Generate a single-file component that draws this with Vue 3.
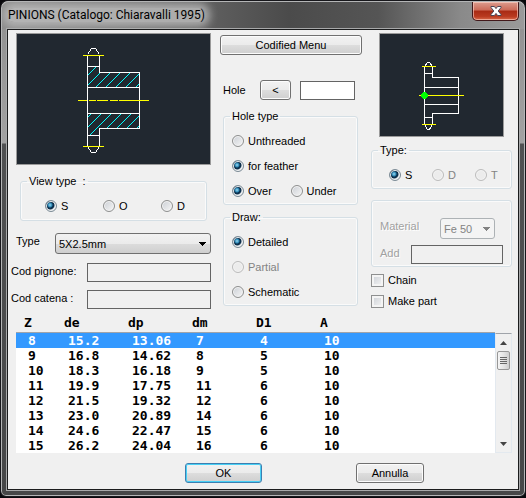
<template>
  <main class="dialog">
    <header class="titlebar">
      <h1 class="titlebar__text">PINIONS (Catalogo: Chiaravalli 1995)</h1>
      <button type="button" class="titlebar__close" aria-label="Close">
        <svg width="14" height="12" viewBox="0 0 14 12" aria-hidden="true">
          <path
            d="M2 1.5h3.4L7 3.6l1.6-2.1H12v1L9.2 6l2.8 3.5v1H8.6L7 8.4l-1.6 2.1H2v-1L4.8 6 2 2.5z"
            fill="#fff" stroke="#4a4656" stroke-width="1"
          />
        </svg>
      </button>
    </header>

    <form class="client" @submit.prevent>
      <div class="columns">
        <!-- Left: section preview and codes -->
        <div class="col col--left">
          <svg class="preview preview--section" viewBox="0 0 193 130" aria-hidden="true">
            <defs>
              <clipPath id="hub-top"><path d="M71 33h12v6h40v15H71z" /></clipPath>
              <clipPath id="hub-bottom"><path d="M71 80h52v15H83v7H71z" /></clipPath>
            </defs>
            <g stroke="#0ff" shape-rendering="crispEdges">
              <path v-for="n in 8" :key="`t${n}`" clip-path="url(#hub-top)" :d="`M${48 + n * 10} 54l22 -22`" />
              <path v-for="n in 9" :key="`b${n}`" clip-path="url(#hub-bottom)" :d="`M${42 + n * 10} 102l24 -24`" />
            </g>
            <g class="outline">
              <path d="M70.5 20.5V112.5M82.5 20.5V38.5H122.5V94.5H82.5V112.5M70.5 32.5H82.5M70.5 53.5H122.5M70.5 79.5H122.5M70.5 101.5H82.5" />
              <path d="M70.5 20.5L74.5 14.5H78.5L82.5 20.5" />
              <path d="M70.5 112.5L74.5 118.5H78.5L82.5 112.5" />
            </g>
            <g class="axis">
              <path d="M66 21.5H87" />
              <path d="M66 112.5H87" />
              <path d="M61 66.5H70M72 66.5H79M80 66.5H91M93 66.5H101M102 66.5H132" />
            </g>
          </svg>

          <fieldset class="group group--view">
            <legend>View type &nbsp;:</legend>
            <label v-for="v in ['S', 'O', 'D']" :key="v" class="option">
              <input v-model="view" type="radio" name="view" :value="v" />{{ v }}
            </label>
          </fieldset>

          <div class="row row--type">
            <label for="feather">Type</label>
            <select id="feather" v-model="feather" class="select">
              <option>5X2.5mm</option>
            </select>
          </div>
          <div class="row row--code">
            <label for="pignone">Cod pignone:</label>
            <input id="pignone" v-model="pignone" type="text" class="field" />
          </div>
          <div class="row row--code">
            <label for="catena">Cod catena :</label>
            <input id="catena" v-model="catena" type="text" class="field" />
          </div>
        </div>

        <!-- Middle: hole and drawing options -->
        <div class="col col--middle">
          <button type="button" class="btn">Codified Menu</button>

          <div class="hole">
            <label for="hole">Hole</label>
            <button type="button" class="btn btn--pick" aria-label="Pick hole">&lt;</button>
            <input id="hole" v-model="hole" type="text" class="field field--white" />
          </div>

          <fieldset class="group group--stack">
            <legend>Hole type</legend>
            <label class="option"><input v-model="holeType" type="radio" name="hole-type" value="plain" />Unthreaded</label>
            <label class="option"><input v-model="holeType" type="radio" name="hole-type" value="feather" />for feather</label>
            <div class="pair">
              <label class="option"><input v-model="side" type="radio" name="side" value="over" />Over</label>
              <label class="option"><input v-model="side" type="radio" name="side" value="under" />Under</label>
            </div>
          </fieldset>

          <fieldset class="group group--stack">
            <legend>Draw:</legend>
            <label class="option"><input v-model="draw" type="radio" name="draw" value="detailed" />Detailed</label>
            <label class="option option--off"><input v-model="draw" type="radio" name="draw" value="partial" disabled />Partial</label>
            <label class="option"><input v-model="draw" type="radio" name="draw" value="schematic" />Schematic</label>
          </fieldset>
        </div>

        <!-- Right: pinion type and material -->
        <div class="col col--right">
          <svg class="preview preview--type" viewBox="0 0 123 102" aria-hidden="true">
            <g class="outline">
              <path d="M44.5 32V91M52.5 32V43.5H78.5V79.5H52.5V91M44.5 39.5H52.5M44.5 53.5H78.5M44.5 70.5H78.5M44.5 83.5H52.5" />
              <path d="M44.5 32.5L47.5 28.5H49.5L52.5 32.5" />
              <path d="M44.5 90.5L47.5 95.5H49.5L52.5 90.5" />
            </g>
            <g class="axis">
              <path d="M42 32.5H56" />
              <path d="M42 90.5H56" />
              <path d="M39 61.5H84" />
            </g>
            <path d="M43 58h3v1h1v1h1v3h-1v1h-1v1h-3v-1h-1v-1h-1v-3h1v-1h1z" fill="#0f0" />
          </svg>

          <fieldset class="group group--kind">
            <legend>Type:</legend>
            <label v-for="k in ['S', 'D', 'T']" :key="k" class="option" :class="{ 'option--off': k !== 'S' }">
              <input v-model="kind" type="radio" name="kind" :value="k" :disabled="k !== 'S'" />{{ k }}
            </label>
          </fieldset>

          <fieldset class="group group--material" disabled aria-label="Material">
            <div class="row">
              <label for="material">Material</label>
              <select id="material" v-model="material" class="select">
                <option>Fe 50</option>
              </select>
            </div>
            <div class="row">
              <label for="add">Add</label>
              <input id="add" v-model="add" type="text" class="field" />
            </div>
          </fieldset>

          <div class="checks">
            <label class="option"><input v-model="chain" type="checkbox" />Chain</label>
            <label class="option"><input v-model="makePart" type="checkbox" />Make part</label>
          </div>
        </div>
      </div>

      <!-- Catalogue list -->
      <div class="list">
        <table class="sizes">
          <thead>
            <tr><th v-for="c in columns" :key="c" scope="col">{{ c }}</th></tr>
          </thead>
          <tbody>
            <tr
              v-for="(row, i) in rows" :key="row[0]"
              :class="{ 'is-selected': i === selected }" @click="selected = i"
            >
              <td v-for="(cell, j) in row" :key="j">{{ cell }}</td>
            </tr>
          </tbody>
        </table>
        <div class="scroll">
          <button type="button" class="scroll__arrow" aria-label="Scroll up">
            <svg width="7" height="4" viewBox="0 0 7 4"><path d="M0 4L3.5 0L7 4z" fill="#444" /></svg>
          </button>
          <div class="scroll__thumb"><i></i><i></i><i></i><i></i></div>
          <button type="button" class="scroll__arrow scroll__arrow--down" aria-label="Scroll down">
            <svg width="7" height="4" viewBox="0 0 7 4"><path d="M0 0H7L3.5 4z" fill="#444" /></svg>
          </button>
        </div>
      </div>

      <footer class="actions">
        <button type="submit" class="btn btn--default">OK</button>
        <button type="button" class="btn btn--cancel">Annulla</button>
      </footer>
    </form>
  </main>
</template>

<script setup>
import { ref } from 'vue'

const view = ref('S')
const feather = ref('5X2.5mm')
const pignone = ref('')
const catena = ref('')
const hole = ref('')
const holeType = ref('feather')
const side = ref('over')
const draw = ref('detailed')
const kind = ref('S')
const material = ref('Fe 50')
const add = ref('')
const chain = ref(false)
const makePart = ref(false)
const selected = ref(0)

const columns = ['Z', 'de', 'dp', 'dm', 'D1', 'A']
const rows = [
  ['8', '15.2', '13.06', '7', '4', '10'],
  ['9', '16.8', '14.62', '8', '5', '10'],
  ['10', '18.3', '16.18', '9', '5', '10'],
  ['11', '19.9', '17.75', '11', '6', '10'],
  ['12', '21.5', '19.32', '12', '6', '10'],
  ['13', '23.0', '20.89', '14', '6', '10'],
  ['14', '24.6', '22.47', '15', '6', '10'],
  ['15', '26.2', '24.04', '16', '6', '10'],
]
</script>

<style>
body {
  margin: 0;
  background: #08080c;
}
</style>

<style scoped>
* {
  box-sizing: border-box;
}

/* ─── Window frame ───────────────────────────────────────── */
.dialog {
  padding: 0 6px 6px;
  border: 1px solid #17171b;
  border-radius: 8px 8px 6px 6px;
  background: linear-gradient(#8f8f8f 0, #a2a2a2 142px, #505152 143px, #464748 100%);
  box-shadow: inset 0 0 0 1px #b4b5b6;
  color: #000;
  font: 11px/14px 'Liberation Sans', Arial, sans-serif;
}

.titlebar {
  display: flex;
  justify-content: space-between;
  align-items: flex-start;
  height: 28px;
  margin: 0 -5px;
  padding: 0 5px 0 6px;
  border-top: 1px solid #b4b5b6;
  border-radius: 7px 7px 0 0;
  background: linear-gradient(90deg, #8c8c8c, #5c5c5c 42%, #4b4b4b 55%, #555 72%, #8a8a8a 88%, #9a9a9a);
  overflow: hidden;
}

.titlebar__text {
  margin: 6px 0 0;
  border-radius: 6px;
  background: rgba(190, 190, 190, 0.8);
  box-shadow: 0 0 8px 5px rgba(190, 190, 190, 0.8);
  font: 400 12px/14px Roboto, 'Open Sans', sans-serif;
}

.titlebar__close {
  display: flex;
  align-items: center;
  justify-content: center;
  width: 47px;
  height: 19px;
  padding: 0;
  border: 1px solid #42181a;
  border-top: 0;
  border-radius: 0 0 5px 5px;
  background: linear-gradient(#dc9c8e, #cc6a58 45%, #a82a14 50%, #b93a20 80%, #d8694a);
  box-shadow: inset 0 0 0 1px rgba(255, 215, 205, 0.6);
}

.client {
  margin: 0;
  padding: 3px 6px 6px 3px;
  border: 1px solid #1b1c1d;
  background: #f0f0f0;
  box-shadow: 0 0 0 1px #a8a9aa;
}

/* ─── Columns ────────────────────────────────────────────── */
.columns {
  display: grid;
  grid-template-columns: 200fr 142fr 141fr;
  gap: 9px;
}

.col {
  display: flex;
  flex-direction: column;
  min-width: 0;
}

.preview {
  display: block;
  border: 1px solid #9a9a9a;
  background: #212830;
}

.preview--section {
  height: 132px;
  margin-left: 5px;
}

.preview--type {
  height: 104px;
  margin: 0 8px;
}

.outline {
  fill: none;
  stroke: #fff;
  shape-rendering: crispEdges;
}

.axis {
  fill: none;
  stroke: #ff0;
  shape-rendering: crispEdges;
}

/* ─── Group boxes ────────────────────────────────────────── */
.group {
  min-width: 0;
  margin: 0;
  padding: 0 8px;
  border: 1px solid #d5dfe5;
  border-radius: 3px;
  box-shadow: inset 0 0 0 1px #fafafa;
}

.group legend {
  padding: 0 2px;
  margin-left: -2px;
}

.group--view {
  display: flex;
  gap: 30px;
  height: 47px;
  margin: 9px 4px 0 9px;
  padding-top: 11px;
}

.group--view .option {
  flex: 0 0 28px;
}

.group--view .option:first-of-type {
  margin-left: 16px;
}

.group--stack {
  margin: 0 4px 0 3px;
  height: 96px;
}

.group--stack .option {
  height: 25px;
}

.group--stack legend + .option {
  margin-top: 5px;
}

.group--stack + .group--stack {
  margin-top: 5px;
}

.pair {
  display: grid;
  grid-template-columns: 1fr 1fr;
}

.group--kind {
  display: flex;
  height: 46px;
  margin-top: 6px;
  padding-top: 11px;
}

.group--kind .option {
  flex: 0 0 43px;
}

.group--kind .option:first-of-type {
  margin-left: 9px;
}

.group--material {
  height: 67px;
  margin-top: 11px;
  padding: 17px 8px 0;
  color: #a0a0a0;
  text-shadow: 1px 1px #fff;
}

.group--material .row {
  justify-content: space-between;
}

.group--material .select {
  width: 55px;
  margin-right: 8px;
}

.group--material .field {
  width: 92px;
}

.group--material .row + .row {
  margin-top: 6px;
}

/* ─── Radios and check boxes ─────────────────────────────── */
.option {
  display: flex;
  align-items: center;
  gap: 4px;
}

.option--off {
  color: #838383;
}

.option input {
  appearance: none;
  flex: none;
  width: 12px;
  height: 12px;
  margin: 0;
  border: 1px solid #8e8f8f;
  background: linear-gradient(135deg, #cbcfd5, #f6f6f6);
  box-shadow: inset 0 0 0 1px #f4f4f4;
}

.option input[type='radio'] {
  border-radius: 50%;
}

.option input[type='radio']:checked {
  border-color: #7b8a95;
  background: radial-gradient(circle at 4px 4px, #9fdcf4 0, #2a86b4 2px, #0c2f4c 3px, #0c2f4c 4px, #dfe4e8 5px);
}

.option input:disabled {
  border-color: #bcbcbc;
  background: #ececec;
}

.option input[type='checkbox'] {
  width: 13px;
  height: 13px;
  box-shadow: inset 0 0 0 2px #f4f4f4;
}

.checks {
  display: grid;
  gap: 7px;
  margin-top: 6px;
}

/* ─── Fields ─────────────────────────────────────────────── */
.row {
  display: flex;
  align-items: flex-start;
}

.row label {
  padding-top: 1px;
}

.row--type {
  margin: 12px 0 9px;
}

.row--type label {
  flex: 0 0 44px;
  padding-left: 5px;
}

.row--code label {
  flex: 0 0 76px;
}

.row--code + .row--code {
  margin-top: 8px;
}

.field {
  flex: 1 1 auto;
  width: 0;
  min-width: 0;
  height: 19px;
  padding: 0 3px;
  border: 1px solid #646464;
  background: #f0f0f0;
  font: inherit;
}

.field--white {
  background: #fff;
}

.group--material .field {
  flex: none;
}

.select {
  appearance: none;
  flex: 1;
  min-width: 0;
  height: 21px;
  padding: 0 18px 0 3px;
  border: 1px solid #707070;
  border-radius: 3px;
  background:
    linear-gradient(#000, #000) right 4px top 8px / 7px 1px no-repeat,
    linear-gradient(#000, #000) right 5px top 9px / 5px 1px no-repeat,
    linear-gradient(#000, #000) right 6px top 10px / 3px 1px no-repeat,
    linear-gradient(#000, #000) right 7px top 11px / 1px 1px no-repeat,
    linear-gradient(#f2f2f2, #ebebeb 50%, #dcdcdc 51%, #cfcfcf);
  color: #000;
  font: inherit;
}

.select:disabled {
  flex: none;
  border-color: #adb2b5;
  background:
    linear-gradient(#838383, #838383) right 4px top 8px / 7px 1px no-repeat,
    linear-gradient(#838383, #838383) right 5px top 9px / 5px 1px no-repeat,
    linear-gradient(#838383, #838383) right 6px top 10px / 3px 1px no-repeat,
    linear-gradient(#838383, #838383) right 7px top 11px / 1px 1px no-repeat,
    #f4f4f4;
  color: #838383;
  opacity: 1;
}

.hole {
  display: grid;
  grid-template-columns: 37px 31px 1fr;
  align-items: center;
  margin: 25px 7px 9px 3px;
}

.hole .field {
  width: auto;
  margin-left: 9px;
}

/* ─── Buttons ────────────────────────────────────────────── */
.btn {
  height: 20px;
  padding: 0;
  border: 1px solid #707070;
  border-radius: 3px;
  background: linear-gradient(#f2f2f2, #ebebeb 50%, #dddddd 51%, #cfcfcf);
  box-shadow: inset 0 0 0 1px #fcfcfc;
  color: #000;
  font: inherit;
}

.col--middle > .btn {
  margin-top: 2px;
}

.btn--default {
  width: 77px;
  border-color: #3c7fb1;
  box-shadow: inset 0 0 0 1px #48d0f5;
}

.btn--cancel {
  width: 68px;
}

.actions {
  display: flex;
  gap: 94px;
  justify-content: center;
  margin: 10px 0 0 86px;
}

/* ─── Catalogue list ─────────────────────────────────────── */
.list {
  display: grid;
  grid-template-columns: 1fr 17px;
  margin: 5px 0 0 5px;
}

.sizes {
  width: 100%;
  border-collapse: separate;
  border-spacing: 0;
  table-layout: fixed;
  font: 700 13px/15px 'DejaVu Sans Mono', 'Liberation Mono', monospace;
}

.sizes th {
  width: 64px;
  height: 19px;
  padding: 1px 0 2px 8px;
  border-bottom: 1px solid #a0a4aa;
  text-align: left;
}

.sizes th:first-child {
  width: 40px;
}

.sizes th:last-child {
  width: auto;
}

.sizes tbody {
  background: #fff;
}

.sizes td {
  height: 15px;
  padding: 0 0 0 12px;
}

.sizes .is-selected {
  background: #3399ff;
  color: #fff;
}

.scroll {
  display: flex;
  flex-direction: column;
  margin-top: 19px;
  padding: 0 1px;
  border: 1px solid #e3e9ef;
  border-top-color: #a0a4aa;
  background: #f0f0f0;
}

.scroll__arrow {
  display: flex;
  align-items: center;
  justify-content: center;
  height: 17px;
  padding: 0;
  border: 0;
  background: none;
}

.scroll__arrow--down {
  margin-top: auto;
}

.scroll__thumb {
  display: grid;
  align-content: center;
  justify-content: center;
  gap: 1px;
  height: 19px;
  border: 1px solid #979797;
  border-radius: 2px;
  background: linear-gradient(90deg, #f5f5f5, #e5e5e5 50%, #cfcfcf);
}

.scroll__thumb i {
  width: 7px;
  height: 1px;
  background: #666;
}
</style>
